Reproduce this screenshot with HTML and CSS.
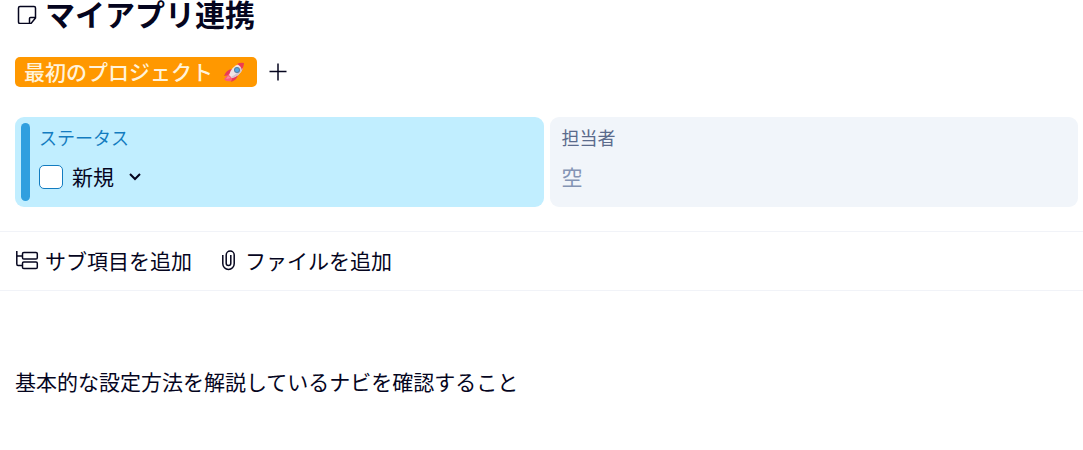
FILE: index.html
```html
<!DOCTYPE html>
<html lang="ja">
<head>
  <meta charset="UTF-8">
  <meta name="viewport" content="width=device-width, initial-scale=1.0">
  <title>マイアプリ連携</title>
  <link rel="stylesheet" href="styles.css">
</head>
<body>
  <header class="item-header">
    <div class="title-row">
      <svg class="note-icon" width="20" height="20" viewBox="0 0 20 20" aria-hidden="true">
        <path d="M3 2.5H17Q18.5 2.5 18.5 4V14L14 19.5H3Q1.5 19.5 1.5 18V4Q1.5 2.5 3 2.5ZM18.5 13.5H13.5Q12.5 13.5 12.5 14.5V19.5" />
      </svg>
      <h1>マイアプリ連携</h1>
    </div>
    <div class="tags">
      <a class="tag" href="#">
        <span>最初のプロジェクト</span>
        <svg width="22" height="22" viewBox="0 0 22 22" aria-hidden="true">
          <path fill="#e93b58" d="M9 8Q3 9 1 15L7 14ZM15 14Q14 19 8 21L9 16Z" />
          <path fill="#fb5c7c" d="M5 14L1 18Q3 21 8 20L10 16L6 13Z" />
          <path fill="#fa8ca0" d="M5 15L3 18L8 17Z" />
          <path fill="#f0e4e4" d="M6 14Q9 5 16 3L20 7Q17 15 9 17Z" />
          <path fill="#d5c4cc" d="M9 17Q17 15 20 7L18 6Q15 13 8 16Z" />
          <path fill="#ef3c50" d="M14 3Q18 1 21 2Q21 5 19 9Q18 5 14 3Z" />
          <circle cx="14" cy="9" r="3" fill="#5a7d9b" />
          <circle cx="14" cy="9" r="2" fill="#4fa8e6" />
        </svg>
      </a>
      <button class="add-tag" type="button" aria-label="プロジェクトを追加">
        <svg width="18" height="18" viewBox="0 0 18 18" aria-hidden="true">
          <path d="M9 0.5V17.5M0.5 8.5H17.5" />
        </svg>
      </button>
    </div>
  </header>

  <section class="fields">
    <div class="field status">
      <label class="field-label" for="status">ステータス</label>
      <div class="field-value">
        <input class="done" type="checkbox" aria-label="完了">
        <div class="select-wrap">
          <select id="status">
            <option>新規</option>
          </select>
          <svg width="12" height="8" viewBox="0 0 12 8" aria-hidden="true">
            <path d="M1 1L6 6L11 1" />
          </svg>
        </div>
      </div>
    </div>
    <div class="field">
      <span class="field-label">担当者</span>
      <div class="field-value empty">空</div>
    </div>
  </section>

  <div class="actions">
    <button class="action" type="button">
      <svg width="24" height="20" viewBox="0 0 24 20" aria-hidden="true">
        <path d="M1.8 0V13Q1.8 14.5 3 14.5H7.5M2 5H7.5M8.5 1.5H21Q22.3 1.5 22.3 2.8V6.7Q22.3 8 21 8H8.8Q7.5 8 7.5 6.7V2.8Q7.5 1.5 8.8 1.5ZM8.8 11H21Q22.3 11 22.3 12.3V16.2Q22.3 17.5 21 17.5H8.8Q7.5 17.5 7.5 16.2V12.3Q7.5 11 8.8 11Z" />
      </svg>
      <span>サブ項目を追加</span>
    </button>
    <button class="action" type="button">
      <svg width="20" height="22" viewBox="0 0 20 22" aria-hidden="true">
        <path d="M3.8 5V13.8A5.7 5.7 0 0 0 15.2 13.8V5A4 4 0 0 0 7.2 5V13.3A2.3 2.3 0 0 0 11.8 13.3V5" />
      </svg>
      <span>ファイルを追加</span>
    </button>
  </div>

  <main class="description">
    <p>基本的な設定方法を解説しているナビを確認すること</p>
  </main>
</body>
</html>
```
FILE: styles.css
```css
* {
  box-sizing: border-box;
}
body {
  margin: 0;
  background: #fff;
  color: #05051e;
  font-family: "Noto Sans CJK JP", sans-serif;
  font-size: 21px;
  line-height: 30px;
}
button, select {
  padding: 0;
  border: none;
  background: none;
  color: inherit;
  font: inherit;
  cursor: pointer;
}
svg {
  flex: none;
  fill: none;
  stroke: currentColor;
  stroke-width: 1.5;
}
.item-header {
  padding: 0 15px;
}
.title-row {
  display: flex;
  align-items: center;
  gap: 8px;
}
.note-icon {
  margin-left: 2px;
}
h1 {
  margin: 0;
  font-size: 30px;
  font-weight: 700;
  line-height: 27px;
}
.tags {
  display: flex;
  align-items: center;
  gap: 12px;
  margin-top: 30px;
}
.tag {
  display: flex;
  align-items: center;
  gap: 10px;
  height: 30px;
  padding: 0 12px 0 9px;
  border-radius: 5px;
  background: #ff9800;
  color: #fff3dc;
  font-weight: 500;
  text-decoration: none;
}
.tag svg {
  stroke: none;
}
.add-tag {
  display: flex;
}
.fields {
  display: grid;
  grid-template-columns: 1fr 1fr;
  gap: 6px;
  padding: 30px 5px 24px 15px;
}
.field {
  position: relative;
  height: 90px;
  padding: 6px 12px;
  border-radius: 9px;
  background: #f1f5fa;
}
.field-label {
  display: block;
  color: #5b6b8c;
  font-size: 18px;
  line-height: 28px;
}
.field-value {
  display: flex;
  align-items: center;
  height: 52px;
}
.empty {
  color: #8494b4;
}
.empty, .tag span, .action span, .select-wrap select {
  padding-bottom: 2px;
}
.status {
  padding-left: 24px;
  background: #c1eeff;
}
.status::before {
  content: "";
  position: absolute;
  top: 6px;
  bottom: 6px;
  left: 6px;
  width: 9px;
  border-radius: 5px;
  background: #309fdf;
}
.status .field-label {
  color: #137cc0;
}
.done {
  appearance: none;
  width: 24px;
  height: 24px;
  margin: 0 9px 0 0;
  border: 1px solid #137cc0;
  border-radius: 5px;
  background: #fff;
}
.done:checked {
  background: #309fdf;
}
.select-wrap {
  display: flex;
  align-items: center;
}
.select-wrap select {
  appearance: none;
  margin-right: -12px;
  padding-right: 27px;
}
.select-wrap svg {
  stroke-width: 2;
  pointer-events: none;
}
.actions {
  display: flex;
  align-items: center;
  gap: 27px;
  height: 60px;
  padding: 0 15px;
  border-top: 1px solid #f1f3f8;
  border-bottom: 1px solid #f1f3f8;
}
.action {
  display: flex;
  align-items: center;
  gap: 6px;
}
.description {
  padding: 75px 15px 40px;
}
.description p {
  margin: 0;
}
```
